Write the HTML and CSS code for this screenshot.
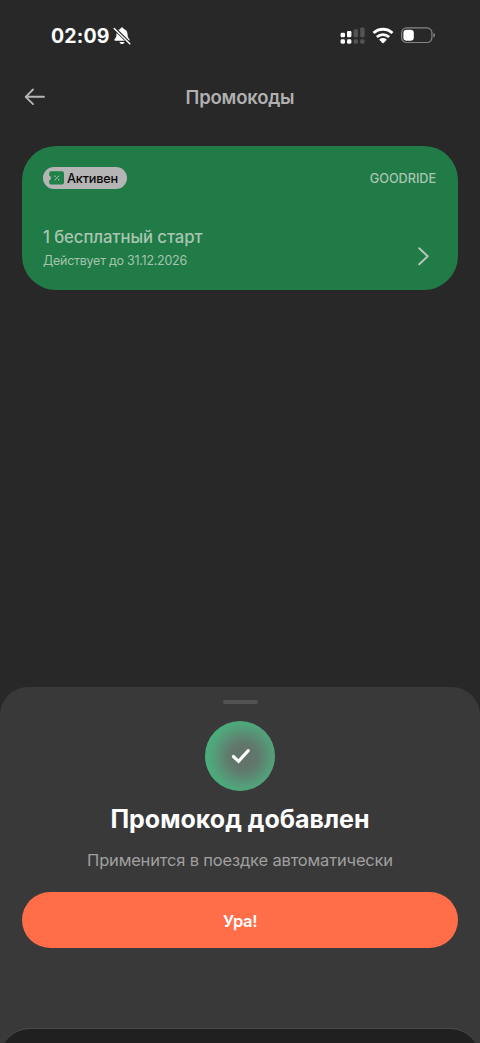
FILE: index.html
```html
<!DOCTYPE html>
<html lang="ru">
<head>
<meta charset="utf-8">
<title>Промокоды</title>
<link rel="stylesheet" href="styles.css">
</head>
<body>
<div class="screen">
  <div class="status">
    <div class="status-left">
      <span class="time">02:09</span>
      <svg class="bell" width="18" height="18" viewBox="0 0 18 18">
        <path fill="#fff" d="M9 .6c1 0 1.6.7 1.700 1.400 2.500.7 3.700 2.600 3.800 5 .1 3 .8 4 1.900 5.200.5.6.3 1.500-.7 1.500H2.300c-1 0-1.200-.9-.7-1.500C2.700 11 3.400 10 3.500 7c.1-2.400 1.300-4.300 3.800-5C7.400 1.300 8 .6 9 .6zM6.500 14.900h5c-.3 1.300-1.400 2.100-2.500 2.100s-2.200-.8-2.500-2.100z"/>
        <path stroke="#282828" stroke-width="3.400" d="M1.200 1.200l15.400 15.200"/>
        <path stroke="#fff" stroke-width="1.400" stroke-linecap="round" d="M1.200 1.400l15.600 15.400"/>
      </svg>
    </div>
    <div class="status-right">
      <svg width="25" height="18" viewBox="0 0 25 18">
        <g fill="#fff"><rect x=".6" y="5.700" width="4.400" height="4.600" rx="1.300"/><rect x=".6" y="12.300" width="4.400" height="4.400" rx="1.400"/><rect x="7" y="4" width="4.400" height="6.300" rx="1.300"/><rect x="7" y="12.300" width="4.400" height="4.400" rx="1.400"/></g>
        <g fill="#535353"><rect x="13.600" y="2.300" width="4.400" height="8" rx="1.300"/><rect x="13.600" y="12.300" width="4.400" height="4.400" rx="1.400"/><rect x="20.200" y=".6" width="4.400" height="9.700" rx="1.300"/><rect x="20.200" y="12.300" width="4.400" height="4.400" rx="1.400"/></g>
      </svg>
      <svg class="wifi" width="22" height="17" viewBox="0 0 22 17">
        <g fill="none" stroke="#fff" stroke-width="2.800"><path d="M1.500 6.100a13.600 13.600 0 0 1 19 0"/><path d="M4.900 10a8.800 8.800 0 0 1 12.200 0"/></g>
        <path fill="#fff" d="M7.500 12.300a5.100 5.100 0 0 1 7 0q.3.4 0 .8l-2.900 2.800q-.6.500-1.200 0l-2.900-2.800q-.3-.4 0-.8z"/>
      </svg>
      <svg class="battery" width="35" height="17" viewBox="0 0 35 17">
        <rect x=".7" y=".9" width="30.200" height="14.600" rx="4.800" fill="none" stroke="#858585" stroke-width="1.200"/>
        <rect x="2.400" y="2.700" width="10.400" height="11" rx="3.300" fill="#fff"/>
        <path fill="#858585" d="M32.300 5.700q1.700.8 1.700 2.500t-1.700 2.500z"/>
      </svg>
    </div>
  </div>
  <div class="header">
    <svg class="back" width="22" height="18" viewBox="0 0 22 18"><path d="M9 1.500L1.700 8.800 9 16.100M1.700 8.800h18.300" fill="none" stroke="#b5b5b5" stroke-width="1.900" stroke-linecap="round" stroke-linejoin="round"/></svg>
    <h1 class="title">Промокоды</h1>
  </div>
  <div class="card">
    <div class="card-row">
      <div class="badge">
        <svg width="15" height="14" viewBox="0 0 15 14"><path fill="#208149" d="M2 .3h11Q15 .3 15 2.300v9.200q0 2-2 2H2Q.2 13.500.2 11.700V9.500Q2 8.700 2 7T.2 4.400V2.100Q.2.300 2 .3z"/><path d="M5.600 9.300l4.400-4.600" stroke="#b8c6bc" stroke-width="1"/><g fill="#b8c6bc"><circle cx="6" cy="5.200" r=".75"/><circle cx="9.700" cy="8.800" r=".75"/></g></svg>
        <span class="badge-text">Активен</span>
      </div>
      <span class="code">GOODRIDE</span>
    </div>
    <div class="card-row card-bottom">
      <div>
        <div class="offer">1 бесплатный старт</div>
        <div class="until">Действует до 31.12.2026</div>
      </div>
      <svg class="chevron" width="13" height="20" viewBox="0 0 13 20"><path d="M2.200 2.300L10.700 10.300 2.200 18.300" fill="none" stroke="#b3c6b8" stroke-width="2" stroke-linecap="round" stroke-linejoin="round"/></svg>
    </div>
  </div>
  <div class="sheet">
    <div class="grip"></div>
    <div class="success"><svg width="20" height="16" viewBox="0 0 20 16"><path d="M3.400 8.500L8.600 13.300 18.200 2.600" fill="none" stroke="#fff" stroke-width="3.100" stroke-linecap="round"/></svg></div>
    <h2 class="sheet-title">Промокод добавлен</h2>
    <p class="sheet-text">Применится в поездке автоматически</p>
    <button class="action">Ура!</button>
    <div class="next-sheet"></div>
  </div>
</div>
</body>
</html>
```

FILE: styles.css
```css
* { box-sizing: border-box; }
body {
  margin: 0;
  background: #282828;
  font-family: Inter, "Liberation Sans", sans-serif;
}
.screen {
  display: flex;
  flex-direction: column;
  height: 1043px;
  overflow: hidden;
  background: #282828;
}
.status {
  display: flex;
  justify-content: space-between;
  height: 70px;
  padding: 26px 44px 0 51px;
}
.status-left, .status-right { display: flex; align-items: center; height: 19px; }
.status-left { gap: 3px; }
.time { padding-top: 1px; font-size: 19.500px; font-weight: 700; letter-spacing: .15px; line-height: 19px; color: #fff; }
.wifi { margin-left: 7px; }
.battery { margin-left: 7px; }
.header {
  display: grid;
  grid-template-columns: 22px 1fr 22px;
  align-items: center;
  height: 53px;
  padding: 0 24px;
}
.title {
  margin: 0;
  text-align: center;
  font-size: 18.500px;
  font-weight: 600;
  letter-spacing: -.2px;
  line-height: 24px;
  padding-top: 1px;
  color: #b0b0b0;
}
.card {
  display: flex;
  flex-direction: column;
  justify-content: space-between;
  height: 144px;
  margin: 23px 22px 0;
  padding: 21px 22px 20px 21px;
  border-radius: 34px;
  background: #207b47;
}
.card-row { display: flex; justify-content: space-between; align-items: center; }
.badge {
  display: flex;
  align-items: center;
  gap: 3px;
  height: 22px;
  padding: 0 9px 0 6px;
  border-radius: 11px;
  background: #b5b5b5;
}
.badge-text { font-size: 12.700px; letter-spacing: -.2px; color: #080808; font-weight: 500; }
.code { padding-top: 1px; font-size: 12.700px; font-weight: 550; letter-spacing: -.05px; color: #abc5b3; }
.card-bottom { align-items: flex-end; }
.offer { font-size: 16.700px; font-weight: 550; letter-spacing: -.08px; line-height: 24px; color: #a9c6b2; }
.until { margin-top: 3px; font-size: 12.500px; letter-spacing: -.26px; line-height: 18px; color: #a4c4af; }
.chevron { margin: 0 6px 4px 0; }
.sheet {
  display: flex;
  flex-direction: column;
  align-items: center;
  flex: 1;
  min-height: 0;
  margin-top: 397px;
  padding-top: 13px;
  border-radius: 28px 28px 0 0;
  background: #393939;
}
.sheet > * { flex-shrink: 0; }
.grip { width: 35px; height: 4px; border-radius: 2px; background: #535353; }
.success {
  display: flex;
  align-items: center;
  justify-content: center;
  width: 70px;
  height: 70px;
  margin-top: 17.400px;
  border-radius: 50%;
  background: radial-gradient(circle 40px at 55% 51%, #63716a 0, #61786c 35%, #559c79 72%, #45b47c 100%);
}
.sheet-title {
  margin: 12px 0 0;
  font-size: 25px;
  font-weight: 700;
  line-height: 32px;
  color: #fff;
}
.sheet-text {
  margin: 13.600px 0 0;
  font-size: 16.500px;
  letter-spacing: -.18px;
  line-height: 22px;
  color: #a0a0a0;
}
.action {
  width: 436px;
  height: 56px;
  margin-top: 21px;
  border: 0;
  border-radius: 28px;
  background: #ff6d49;
  font: 600 16.500px Inter, sans-serif;
  letter-spacing: -.4px;
  padding: 2px 0 0;
  color: #fff;
}
.next-sheet {
  width: 480px;
  height: 60px;
  margin-top: 80px;
  border-top: 1px solid #4a4a4a;
  border-radius: 30px 30px 0 0;
  background: #202020;
}
```
